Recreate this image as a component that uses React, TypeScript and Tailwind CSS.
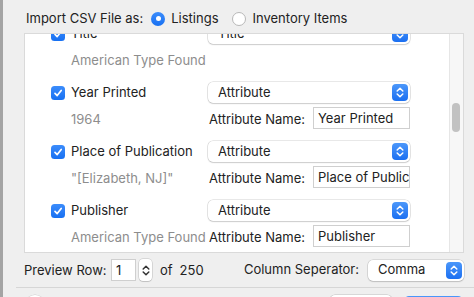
import React from "react";

const Chevrons = ({ color = "white" }: { color?: string }) => (
  <svg width="10" height="13" viewBox="0 0 10 13" fill="none">
    <path d="M2.2 5 L5 2.3 L7.8 5" stroke={color} strokeWidth="1.5" strokeLinecap="round" strokeLinejoin="round" />
    <path d="M2.2 8 L5 10.7 L7.8 8" stroke={color} strokeWidth="1.5" strokeLinecap="round" strokeLinejoin="round" />
  </svg>
);

const Select = ({ value, width = "w-[202px]" }: { value: string; width?: string }) => (
  <div className={`${width} h-[21px] rounded-[5px] bg-white shadow-[0_0_0_0.5px_rgba(0,0,0,0.18),0_1px_1.5px_rgba(0,0,0,0.12)] flex items-center pl-[10px] shrink-0`}>
    <span className="text-[13px] text-[#222]">{value}</span>
    <div className="ml-auto mr-[2px] w-[16px] h-[17px] rounded-[4px] bg-gradient-to-b from-[#4b97fa] to-[#1a6ff1] flex items-center justify-center">
      <Chevrons />
    </div>
  </div>
);

const Checkbox = () => (
  <div className="w-[14px] h-[14px] rounded-[3.5px] bg-gradient-to-b from-[#3b8cfb] to-[#1670f2] flex items-center justify-center shrink-0">
    <svg width="10" height="10" viewBox="0 0 10 10" fill="none">
      <path d="M2 5.3 L4.2 7.6 L8.2 2.4" stroke="white" strokeWidth="1.7" strokeLinecap="round" strokeLinejoin="round" />
    </svg>
  </div>
);

const Row = ({ label, sub, field, attrName }: { label: string; sub: string; field: string; attrName?: string }) => (
  <div className="flex flex-col">
    <div className="flex items-center h-[21px]">
      <div className="w-[157px] flex items-center gap-[6px] shrink-0">
        <Checkbox />
        <span className="text-[13px] text-[#222] whitespace-nowrap">{label}</span>
      </div>
      <Select value={field} />
    </div>
    <div className="flex items-center h-[22px] mt-[4px]">
      <div className="w-[157px] pl-[20px] pt-[3px] text-[13px] text-[#8d8d8d] whitespace-nowrap shrink-0">{sub}</div>
      {attrName && (
        <div className="w-[202px] flex items-center pl-[1px] shrink-0">
          <span className="pt-[3px] text-[13px] text-[#222] whitespace-nowrap">Attribute Name:</span>
          <div className="ml-auto w-[97px] h-[22px] bg-white border border-[#cfcfcf] flex items-center pl-[4px] pt-[1px] overflow-hidden">
            <span className="text-[13px] text-[#222] whitespace-nowrap">{attrName}</span>
          </div>
        </div>
      )}
    </div>
  </div>
);

export default function App() {
  return (
    <div
      className="w-[474px] h-[297px] bg-[#efefef] flex overflow-hidden"
      style={{ fontFamily: "Inter, 'Noto Sans', sans-serif" }}
    >
      <div className="w-[3px] bg-[#a4a4a4] shrink-0" />
      <div className="flex-1 flex flex-col">
        {/* header */}
        <div className="h-[33px] pt-[4px] pl-[23px] flex items-center shrink-0">
          <span className="text-[13px] text-[#222] whitespace-nowrap">Import CSV File as:</span>
          <div className="ml-[8px] w-[14px] h-[14px] rounded-full bg-gradient-to-b from-[#3b8cfb] to-[#1670f2] flex items-center justify-center">
            <div className="w-[5px] h-[5px] rounded-full bg-white" />
          </div>
          <span className="ml-[6px] text-[13px] text-[#222]">Listings</span>
          <div className="ml-[13px] w-[14px] h-[14px] rounded-full bg-white border border-[#b8b8b8]" />
          <span className="ml-[7px] text-[13px] text-[#222] whitespace-nowrap">Inventory Items</span>
        </div>

        {/* scroll box */}
        <div className="ml-[21px] w-[440px] h-[220px] border border-[#dadada] bg-white flex shrink-0">
          <div className="flex-1 overflow-hidden">
            <div className="mt-[-11px] pl-[26px] flex flex-col gap-[12px]">
              <Row label="Title" sub="American Type Found" field="Title" />
              <Row label="Year Printed" sub="1964" field="Attribute" attrName="Year Printed" />
              <Row label="Place of Publication" sub={'"[Elizabeth, NJ]"'} field="Attribute" attrName="Place of Publication" />
              <Row label="Publisher" sub="American Type Found" field="Attribute" attrName="Publisher" />
            </div>
          </div>
          <div className="w-[14px] bg-[#f7f7f7] border-l border-[#e6e6e6] shrink-0">
            <div className="ml-[2px] mt-[69px] w-[8px] h-[29px] rounded-full bg-[#c2c2c2]" />
          </div>
        </div>

        {/* bottom bar */}
        <div className="mt-[6px] h-[22px] flex items-center pl-[21px] pr-[10px] shrink-0">
          <span className="w-[87px] pt-[2px] text-[13px] text-[#222] whitespace-nowrap">Preview Row:</span>
          <div className="w-[25px] h-[22px] bg-white border border-[#cfcfcf] flex items-center pl-[4px] pt-[1px]">
            <span className="text-[13px] text-[#222]">1</span>
          </div>
          <div className="ml-[3px] w-[13px] h-[22px] rounded-[4px] bg-white shadow-[0_0_0_0.5px_rgba(0,0,0,0.2),0_1px_1px_rgba(0,0,0,0.1)] flex items-center justify-center">
            <Chevrons color="#333" />
          </div>
          <span className="ml-[8px] pt-[2px] text-[13px] text-[#222]">of</span>
          <span className="ml-[7px] pt-[2px] text-[13px] text-[#222]">250</span>
          <span className="ml-auto text-[13px] text-[#222] whitespace-nowrap">Column Seperator:</span>
          <div className="ml-[9px]">
            <Select value="Comma" width="w-[96px]" />
          </div>
        </div>

        {/* separator */}
        <div className="mt-[6px] ml-[13px] h-px bg-[#d6d6d6] shrink-0" />

        {/* buttons */}
        <div className="mt-[7px] flex items-start shrink-0">
          <div className="ml-[22px] w-[20px] h-[20px] rounded-full bg-white shadow-[0_0_0_0.5px_rgba(0,0,0,0.15)]" />
          <div className="ml-auto w-[62px] h-[22px] rounded-[5px] bg-white shadow-[0_0_0_0.5px_rgba(0,0,0,0.2),0_1px_1px_rgba(0,0,0,0.1)]" />
          <div className="ml-[12px] mr-[11px] mt-[1px] w-[59px] h-[22px] rounded-[5px] bg-gradient-to-b from-[#4b97fa] to-[#1a6ff1]" />
        </div>
      </div>
    </div>
  );
}
